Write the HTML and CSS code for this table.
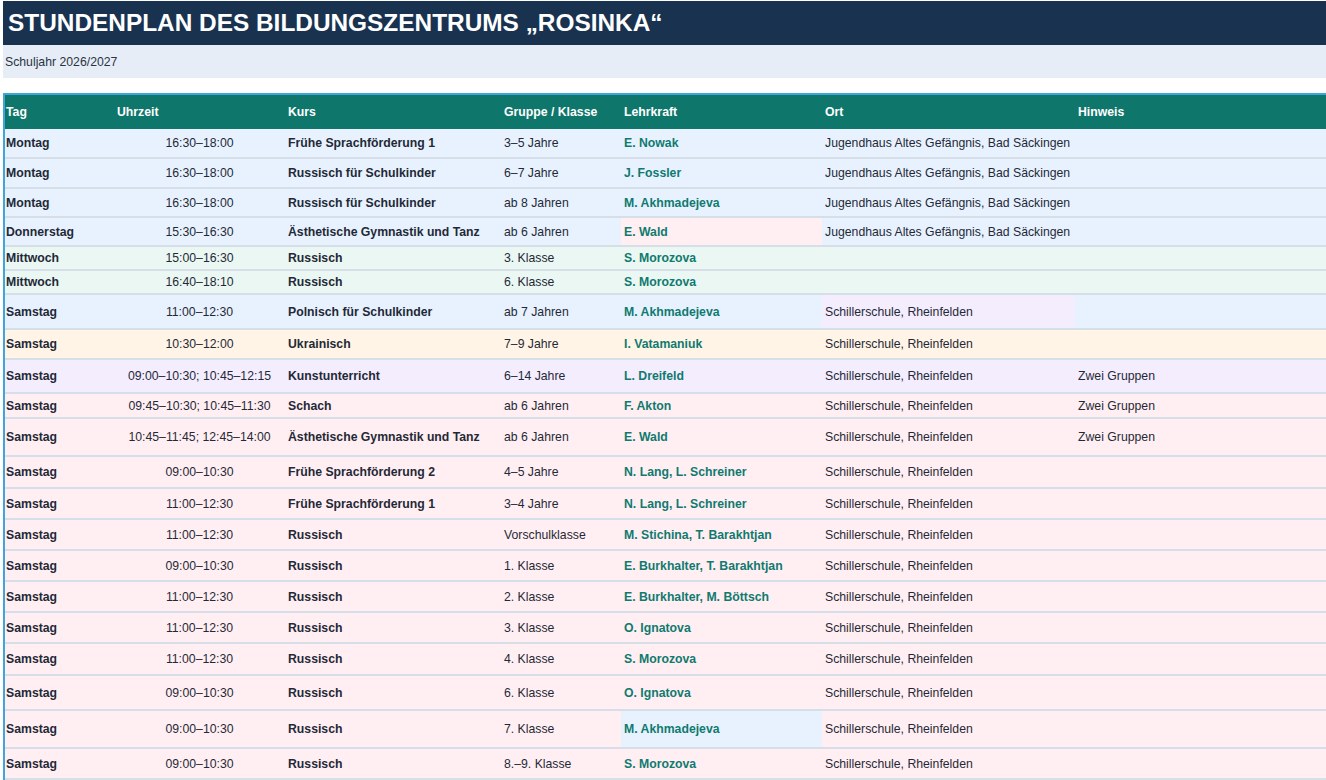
FILE: index.html
```html
<!DOCTYPE html>
<html lang="de">
<head>
<meta charset="utf-8">
<title>Stundenplan Rosinka</title>
<link rel="stylesheet" href="styles.css">
</head>
<body>
<header class="title-bar"><h1>STUNDENPLAN DES BILDUNGSZENTRUMS „ROSINKA“</h1></header>
<div class="sub-bar">Schuljahr 2026/2027</div>
<div class="table">
  <div class="row head">
    <div class="c tag">Tag</div><div class="c">Uhrzeit</div><div class="c">Kurs</div><div class="c">Gruppe / Klasse</div><div class="c">Lehrkraft</div><div class="c">Ort</div><div class="c">Hinweis</div>
  </div>
  <div class="row blue h30"><div class="c tag">Montag</div><div class="c time">16:30–18:00</div><div class="c kurs">Frühe Sprachförderung 1</div><div class="c">3–5 Jahre</div><div class="c lk">E. Nowak</div><div class="c">Jugendhaus Altes Gefängnis, Bad Säckingen</div><div class="c"></div></div>
  <div class="row blue h30"><div class="c tag">Montag</div><div class="c time">16:30–18:00</div><div class="c kurs">Russisch für Schulkinder</div><div class="c">6–7 Jahre</div><div class="c lk">J. Fossler</div><div class="c">Jugendhaus Altes Gefängnis, Bad Säckingen</div><div class="c"></div></div>
  <div class="row blue h29"><div class="c tag">Montag</div><div class="c time">16:30–18:00</div><div class="c kurs">Russisch für Schulkinder</div><div class="c">ab 8 Jahren</div><div class="c lk">M. Akhmadejeva</div><div class="c">Jugendhaus Altes Gefängnis, Bad Säckingen</div><div class="c"></div></div>
  <div class="row blue h29"><div class="c tag">Donnerstag</div><div class="c time">15:30–16:30</div><div class="c kurs">Ästhetische Gymnastik und Tanz</div><div class="c">ab 6 Jahren</div><div class="c lk bg-pink">E. Wald</div><div class="c">Jugendhaus Altes Gefängnis, Bad Säckingen</div><div class="c"></div></div>
  <div class="row green h24"><div class="c tag">Mittwoch</div><div class="c time">15:00–16:30</div><div class="c kurs">Russisch</div><div class="c">3. Klasse</div><div class="c lk">S. Morozova</div><div class="c"></div><div class="c"></div></div>
  <div class="row green h24"><div class="c tag">Mittwoch</div><div class="c time">16:40–18:10</div><div class="c kurs">Russisch</div><div class="c">6. Klasse</div><div class="c lk">S. Morozova</div><div class="c"></div><div class="c"></div></div>
  <div class="row blue h35"><div class="c tag">Samstag</div><div class="c time">11:00–12:30</div><div class="c kurs">Polnisch für Schulkinder</div><div class="c">ab 7 Jahren</div><div class="c lk">M. Akhmadejeva</div><div class="c bg-lav">Schillerschule, Rheinfelden</div><div class="c"></div></div>
  <div class="row orange h30"><div class="c tag">Samstag</div><div class="c time">10:30–12:00</div><div class="c kurs">Ukrainisch</div><div class="c">7–9 Jahre</div><div class="c lk">I. Vatamaniuk</div><div class="c">Schillerschule, Rheinfelden</div><div class="c"></div></div>
  <div class="row lav h34"><div class="c tag">Samstag</div><div class="c time">09:00–10:30; 10:45–12:15</div><div class="c kurs">Kunstunterricht</div><div class="c">6–14 Jahre</div><div class="c lk">L. Dreifeld</div><div class="c">Schillerschule, Rheinfelden</div><div class="c">Zwei Gruppen</div></div>
  <div class="row pink h25"><div class="c tag">Samstag</div><div class="c time">09:45–10:30; 10:45–11:30</div><div class="c kurs">Schach</div><div class="c">ab 6 Jahren</div><div class="c lk">F. Akton</div><div class="c">Schillerschule, Rheinfelden</div><div class="c">Zwei Gruppen</div></div>
  <div class="row pink h38"><div class="c tag">Samstag</div><div class="c time">10:45–11:45; 12:45–14:00</div><div class="c kurs">Ästhetische Gymnastik und Tanz</div><div class="c">ab 6 Jahren</div><div class="c lk">E. Wald</div><div class="c">Schillerschule, Rheinfelden</div><div class="c">Zwei Gruppen</div></div>
  <div class="row pink h32"><div class="c tag">Samstag</div><div class="c time">09:00–10:30</div><div class="c kurs">Frühe Sprachförderung 2</div><div class="c">4–5 Jahre</div><div class="c lk">N. Lang, L. Schreiner</div><div class="c">Schillerschule, Rheinfelden</div><div class="c"></div></div>
  <div class="row pink h31"><div class="c tag">Samstag</div><div class="c time">11:00–12:30</div><div class="c kurs">Frühe Sprachförderung 1</div><div class="c">3–4 Jahre</div><div class="c lk">N. Lang, L. Schreiner</div><div class="c">Schillerschule, Rheinfelden</div><div class="c"></div></div>
  <div class="row pink h31"><div class="c tag">Samstag</div><div class="c time">11:00–12:30</div><div class="c kurs">Russisch</div><div class="c">Vorschulklasse</div><div class="c lk">M. Stichina, T. Barakhtjan</div><div class="c">Schillerschule, Rheinfelden</div><div class="c"></div></div>
  <div class="row pink h31"><div class="c tag">Samstag</div><div class="c time">09:00–10:30</div><div class="c kurs">Russisch</div><div class="c">1. Klasse</div><div class="c lk">E. Burkhalter, T. Barakhtjan</div><div class="c">Schillerschule, Rheinfelden</div><div class="c"></div></div>
  <div class="row pink h31"><div class="c tag">Samstag</div><div class="c time">11:00–12:30</div><div class="c kurs">Russisch</div><div class="c">2. Klasse</div><div class="c lk">E. Burkhalter, M. Böttsch</div><div class="c">Schillerschule, Rheinfelden</div><div class="c"></div></div>
  <div class="row pink h31"><div class="c tag">Samstag</div><div class="c time">11:00–12:30</div><div class="c kurs">Russisch</div><div class="c">3. Klasse</div><div class="c lk">O. Ignatova</div><div class="c">Schillerschule, Rheinfelden</div><div class="c"></div></div>
  <div class="row pink h32"><div class="c tag">Samstag</div><div class="c time">11:00–12:30</div><div class="c kurs">Russisch</div><div class="c">4. Klasse</div><div class="c lk">S. Morozova</div><div class="c">Schillerschule, Rheinfelden</div><div class="c"></div></div>
  <div class="row pink h35"><div class="c tag">Samstag</div><div class="c time">09:00–10:30</div><div class="c kurs">Russisch</div><div class="c">6. Klasse</div><div class="c lk">O. Ignatova</div><div class="c">Schillerschule, Rheinfelden</div><div class="c"></div></div>
  <div class="row pink h38"><div class="c tag">Samstag</div><div class="c time">09:00–10:30</div><div class="c kurs">Russisch</div><div class="c">7. Klasse</div><div class="c lk bg-blue">M. Akhmadejeva</div><div class="c">Schillerschule, Rheinfelden</div><div class="c"></div></div>
  <div class="row pink h31"><div class="c tag">Samstag</div><div class="c time">09:00–10:30</div><div class="c kurs">Russisch</div><div class="c">8.–9. Klasse</div><div class="c lk">S. Morozova</div><div class="c">Schillerschule, Rheinfelden</div><div class="c"></div></div>
</div>
</body>
</html>
```
FILE: styles.css
```css
* { box-sizing: border-box; }
html, body { margin: 0; padding: 0; background: #ffffff; }
body {
  padding: 1px 0 0 3px;
  font-family: "Liberation Sans", Arial, sans-serif;
  font-size: 12.25px;
  color: #1f2937;
}
.title-bar {
  background: #193250;
  height: 44px;
  display: flex;
  align-items: center;
  padding-left: 5px;
}
.title-bar h1 {
  margin: 0;
  color: #ffffff;
  font-size: 24.4px;
  font-weight: bold;
  line-height: 1;
}
.sub-bar {
  background: #e6edf6;
  height: 33px;
  display: flex;
  align-items: center;
  padding-left: 2px;
  color: #2a3342;
}
.table {
  margin-top: 15px;
  border-left: 2px solid #3ea6d8;
  border-top: 2px solid #3ea6d8;
}
.row {
  display: grid;
  grid-template-columns: 109px 171px 216px 120px 201px 253px 1fr;
  border-bottom: 2px solid #d6dee8;
}
.row.head {
  background: #0f766c;
  color: #ffffff;
  font-weight: bold;
  height: 34px;
  border-bottom: none;
}
.c {
  display: flex;
  align-items: center;
  padding: 0 3px;
  white-space: nowrap;
}
.c.tag { padding-left: 1px; font-weight: bold; }
.c.time { justify-content: center; }
.c.kurs { font-weight: bold; }
.c.lk { font-weight: bold; color: #0f7a70; }
.blue { background: #e8f2fe; }
.green { background: #ebf7f2; }
.orange { background: #fff4e6; }
.lav { background: #f4edfe; }
.pink { background: #ffeff2; }
.bg-pink { background: #ffeff2; }
.bg-blue { background: #e8f2fe; }
.bg-lav { background: #f4edfe; }
.h24 { height: 24px; }
.h25 { height: 25px; }
.h29 { height: 29px; }
.h30 { height: 30px; }
.h31 { height: 31px; }
.h32 { height: 32px; }
.h34 { height: 34px; }
.h35 { height: 35px; }
.h38 { height: 38px; }
```
